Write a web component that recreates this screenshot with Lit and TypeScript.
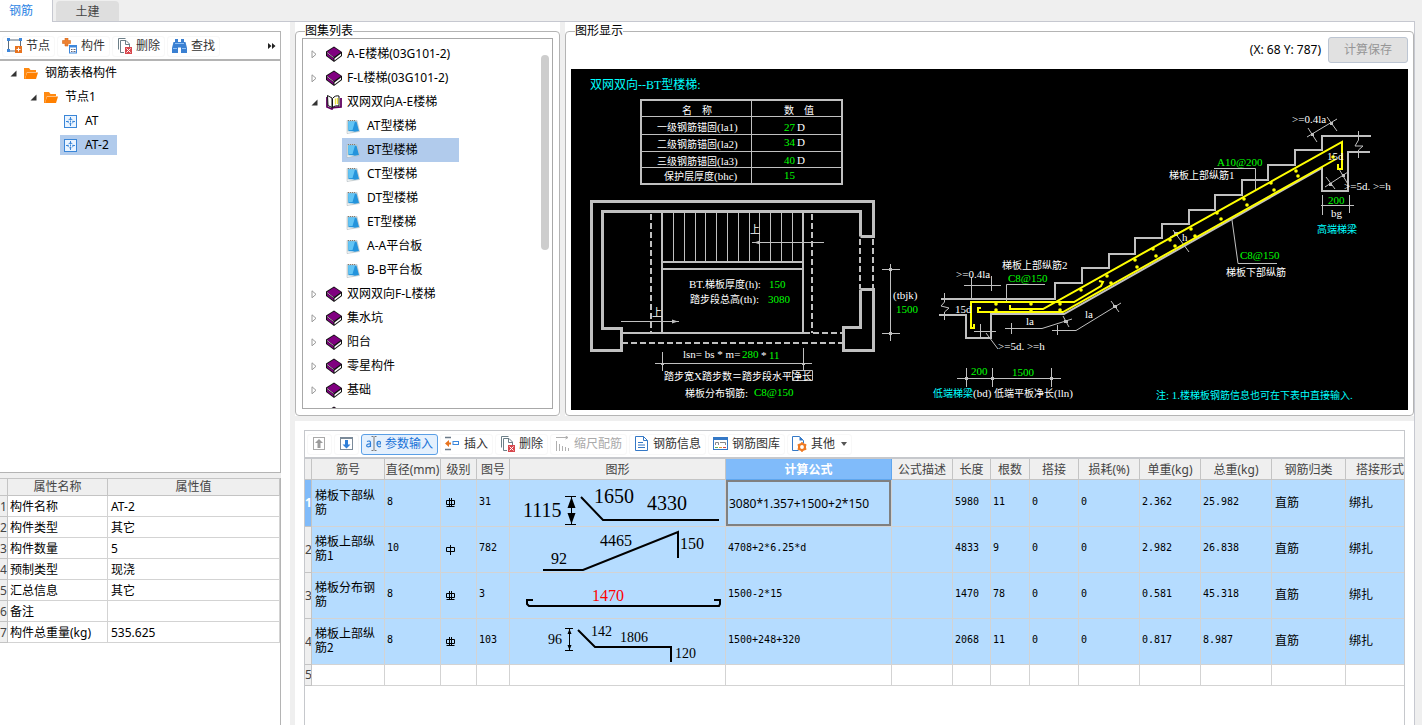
import { LitElement, html, svg, css, nothing } from "lit";
import { customElement, property, state } from "lit/decorators.js";
import { classMap } from "lit/directives/class-map.js";

/* ---------- icons ---------- */

const icons: Record<string, unknown> = {
  node: svg`<rect x="1.5" y="2" width="12" height="11" fill="#fff" stroke="#5b6b7b" />
    <path d="M0 0h3v3H0zM12 0h3v3h-3zM0 11h3v3H0z" fill="#3d87dc" />
    <rect x="8" y="8" width="7" height="7" fill="#e8731e" /><path d="M11.500 9.500v4M9.500 11.500h4" stroke="#fff" />`,
  part: svg`<path d="M3 0h3v2.500h2.500v3H6V8H3V5.500H.5v-3H3z" fill="#ee8232" stroke="#d56a1c" stroke-width=".6" />
    <rect x="7.500" y="7.500" width="7" height="7.500" fill="#fff" stroke="#3d87dc" /><path d="M7 7h8v2.500H7z" fill="#3d87dc" /><path d="M9 11.500h1.500M11.500 11.500h2M9 13.500h1.500M11.500 13.500h2" stroke="#667" />`,
  del: svg`<path d="M1.500 11.500v-11h7" fill="none" stroke="#6d7f88" /><path d="M7 14.500H3.500v-12H9l3.500 3.500v3" fill="#fff" stroke="#6d7f88" /><path d="M8.500 2.500v4h4" fill="none" stroke="#6d7f88" />
    <rect x="8" y="9" width="7" height="7" fill="#d8474d" /><path d="M9.500 10.500l4 4M13.500 10.500l-4 4" stroke="#fff" />`,
  find: svg`<path d="M3 1h3v3h3V1h3v3h1.500l1.500 6v5H9V9.500H6V15H0v-5l1.500-6H3z" fill="#3a80d2" /><path d="M1 10.500h4M10 10.500h4M3 5.500h9" stroke="#8fc0f5" />`,
  up: svg`<rect x="1.500" y="1.500" width="11" height="12" fill="#fff" stroke="#a9a9a9" /><path d="M7 3l4 4H8.500v5h-3V7H3z" fill="#9c9c9c" />`,
  down: svg`<rect x="1.500" y="1.500" width="12" height="12" fill="#fff" stroke="#7b8a99" /><path d="M1 1h13v2H1z" fill="#7b8a99" /><path d="M7.500 12.500l-4-4H6V4h3v4.500h2.500z" fill="#2f7fd8" />`,
  ae: svg`<path d="M5.500.5h2m1 0h2M8 1v13M5.500 14.500h2m1 0h2" stroke="#777" fill="none" />
    <path d="M1 5.500c2-1 3.500-.3 3.500 1.200V11M4.500 8C2 7.500.7 8.500.7 9.500c0 2 3 1.800 3.800 0M11 8h4c0-3.500-4-3.300-4 0s3 3.200 4 2" stroke="#2f7fd8" fill="none" stroke-width="1.200" />`,
  insert: svg`<path d="M0 1.500h6M0 13.500h6" stroke="#6b7a88" stroke-width="1.500" /><path d="M6 6.500v2H4V11L0 7.500 4 4v2.500z" fill="#e8731e" /><rect x="8" y="5.500" width="5.500" height="3" fill="#fff" stroke="#3d87dc" />`,
  scale: svg`<path d="M1.500 15V5M1 1.500h12M10.500 0L13 1.500 10.500 3M4.500 15V8M7.500 15v-5M10.500 15v-4M13.500 15v-3" stroke="#b0b0b0" fill="none" />`,
  info: svg`<path d="M1.500.5h8l4 4v10h-12z" fill="#fff" stroke="#3478c6" /><path d="M9.500.5v4h4" fill="none" stroke="#3478c6" /><path d="M4 6.500h5M4 9h7M4 11.500h7" stroke="#3478c6" />`,
  lib: svg`<rect x=".5" y="1.500" width="14" height="12" fill="#fff" stroke="#3478c6" /><path d="M0 1h15v3H0z" fill="#3478c6" /><path d="M2.500 9V6.500h3V9M7 6.500h5.500V9" fill="none" stroke="#888" /><path d="M2 11.500h3" stroke="#5aaf5a" /><path d="M6 11.500h3" stroke="#e0a030" /><path d="M10 11.500h3" stroke="#d8474d" />`,
  other: svg`<path d="M6.500 14.500h-6V.5h7l4 4v3" fill="#fff" stroke="#3478c6" /><path d="M7.500.5v4h4z" fill="#3478c6" /><circle cx="10" cy="11" r="3" fill="#fff" stroke="#ee7a24" stroke-width="2.200" /><path d="M10 6v2M10 14v2M5.700 8.500l1.800 1M12.500 12.500l1.800 1M14.300 8.500l-1.800 1M7.500 12.500l-1.800 1" stroke="#ee7a24" stroke-width="1.500" />`,
  folder: svg`<path d="M0 13V2h5l1.500 2H12v2H3L1 13z" fill="#ff8a12" /><path d="M3 6.500H14L12 13H1z" fill="#ff8000" />`,
  cell: svg`<rect x=".5" y="1.500" width="12" height="12" fill="#eaf4ff" stroke="#3a86d8" /><path d="M6.500 3v3.500M6.500 8.500V12M2 7.500h2.500M8.500 7.500H11" stroke="#3a86d8" /><circle cx="6.500" cy="7.500" r="2.500" fill="none" stroke="#3a86d8" stroke-dasharray="2 1" /><path d="M6 7h1v1H6z" fill="#3a86d8" />`,
  book: svg`<path d="M0 5.500L8 .5l8 5.500v4L8 16 0 10z" fill="#111" /><path d="M1 6l7-4.500L15 6 8 11z" fill="#800080" /><path d="M1 7.500l6.500 5v2L1 9.800z" fill="#800080" /><path d="M8.500 12.500l6.500-5v2l-6.500 5z" fill="#fff" /><path d="M1 6.500l6.500 5" stroke="#e9c0e9" stroke-width=".8" />`,
  open: svg`<path d="M1 3v10l5 2 1-1.500 8-.5V4" fill="none" stroke="#600060" stroke-width="1.800" /><path d="M1.500 1.500L6 4v9.500l-4-2z" fill="#fff" stroke="#111" /><path d="M6.500 4.500c2-2.500 4-3 6.500-2.500v10c-2.500-.5-5 0-6.500 1.500z" fill="#fff" stroke="#111" /><path d="M9.500 4.500v6M11.500 4v6" stroke="#e8e040" stroke-width="1.300" />`,
  pad: svg`<path d="M1 1.500h10l2.500 11L1 14.500z" fill="#d8ddd8" stroke="#a9b5bd" stroke-width=".5" /><path d="M2 2.500h8.500l2.500 9.500-4 .8-6.500-.6z" fill="#2494dc" /><path d="M2 2.500h7L6.500 11l-4 .3z" fill="#62c4f4" /><path d="M1.500 12.500h7l-7 1.500z" fill="#f4f7fa" /><path d="M2 1.500h8" stroke="#8a7a68" stroke-dasharray="1 1" />`,
};

const icon = (name: string, w = 15, h = 15) =>
  html`<svg width=${w} height=${h} viewBox="0 0 ${w} ${h}" aria-hidden="true">${icons[name]}</svg>`;

const base = css`
  :host {
    font-family: "Noto Sans", "Noto Sans CJK SC", sans-serif;
    font-size: 12px;
    line-height: 16px;
    color: #000;
  }
  * {
    box-sizing: border-box;
  }
  svg {
    flex: none;
    display: block;
  }
  button {
    font: inherit;
    color: inherit;
    margin: 0;
  }
`;

/* ---------- toolbar ---------- */

interface Tool {
  icon: string;
  label?: string;
  name?: string;
  active?: boolean;
  disabled?: boolean;
  menu?: boolean;
}

@customElement("tool-bar")
export class ToolBar extends LitElement {
  static styles = [
    base,
    css`
      :host {
        display: flex;
        align-items: center;
        gap: 2px;
        color: #333;
      }
      .tool {
        display: flex;
        align-items: center;
        gap: 4px;
        height: 21px;
        padding: 0 4px;
        border: 1px solid #f8f8f8;
        border-radius: 3px;
        background: #fff;
        white-space: nowrap;
      }
      .active {
        border-color: #5a9fe6;
        background: #e4f0fd;
        color: #1a73d8;
      }
      .tool:disabled {
        color: #aaa;
      }
      .caret {
        border: 3px solid transparent;
        border-top: 4px solid #555;
        border-bottom: 0;
        margin-left: 2px;
      }
    `,
  ];
  @property({ attribute: false }) tools: Tool[] = [];
  render() {
    return this.tools.map(
      (t) => html`<button
        class=${classMap({ tool: true, active: !!t.active })}
        ?disabled=${t.disabled}
        aria-label=${t.label ?? t.name ?? ""}
      >
        ${icon(t.icon, 15, 16)}${t.label ? html`<span>${t.label}</span>` : nothing}${t.menu
          ? html`<span class="caret"></span>`
          : nothing}
      </button>`
    );
  }
}

/* ---------- tree ---------- */

interface TreeItem {
  label: string;
  icon: string;
  level: number;
  arrow?: "open" | "closed";
}

@customElement("item-tree")
export class ItemTree extends LitElement {
  static styles = [
    base,
    css`
      :host {
        display: block;
        overflow: hidden;
      }
      .list {
        margin: 0;
        padding: 0;
        list-style: none;
      }
      .row {
        display: flex;
        align-items: center;
        height: 24px;
      }
      .left .l1 {
        padding-left: 20px;
      }
      .left .l2 {
        padding-left: 40px;
      }
      .atlas .l1 {
        padding-left: 20px;
      }
      .arrow {
        width: 15px;
        display: flex;
      }
      .left .arrow {
        width: 14px;
      }
      .item {
        display: flex;
        align-items: center;
        gap: 4px;
        height: 24px;
        padding: 0 8px 0 4px;
        margin-left: -4px;
        border: 0;
        background: none;
        white-space: nowrap;
      }
      .left .item {
        height: 20px;
        gap: 7px;
      }
      .item.selected {
        background: #b1cbec;
      }
      .atlas .l1 .item {
        min-width: 117px;
        gap: 7px;
      }
    `,
  ];
  @property({ attribute: false }) items: TreeItem[] = [];
  @property() kind = "left";
  @state() private picked = "";
  @property() selected = "";

  render() {
    const current = this.picked || this.selected;
    return html`<ul class="list ${this.kind}" role="tree">
      ${this.items.map(
        (i) => html`<li class="row l${i.level}" role="treeitem">
          <span class="arrow">
            ${i.arrow === "open"
              ? html`<svg width="7" height="7"><path d="M6.500 .5v6h-6z" fill="#333" /></svg>`
              : i.arrow === "closed"
                ? html`<svg width="7" height="9"><path d="M1 .8v7l4-3.500z" fill="#fff" stroke="#999" /></svg>`
                : nothing}
          </span>
          <button
            class=${classMap({ item: true, selected: !!i.label && i.label === current })}
            @click=${() => (this.picked = i.label)}
          >
            ${i.icon === "book" || i.icon === "open" ? icon(i.icon, 17, 16) : icon(i.icon, 14, 15)}<span>${i.label}</span>
          </button>
        </li>`
      )}
    </ul>`;
  }
}

/* ---------- property grid ---------- */

@customElement("property-grid")
export class PropertyGrid extends LitElement {
  static styles = [
    base,
    css`
      :host {
        display: block;
      }
      .grid {
        width: 100%;
        table-layout: fixed;
        border-collapse: separate;
        border-spacing: 0;
        border-top: 1px solid #c4c4c4;
      }
      .num {
        width: 8px;
      }
      .key {
        width: 100px;
      }
      th,
      td {
        height: 21px;
        padding: 2px 0 0 2px;
        border-right: 1px solid #d3d3d3;
        border-bottom: 1px solid #d3d3d3;
        text-align: left;
        font-weight: 400;
        white-space: nowrap;
        overflow: hidden;
      }
      thead th {
        height: 17px;
        padding: 0;
        text-align: center;
        background: #efefef;
        border-color: #c4c4c4;
        color: #444;
      }
      tbody th {
        padding: 2px 0 0;
        background: #efefef;
        border-color: #c4c4c4;
        color: #444;
      }
      td + td {
        padding-left: 3px;
      }
    `,
  ];
  @property({ attribute: false }) rows: [string, string][] = [];
  render() {
    return html`<table class="grid">
      <colgroup><col class="num" /><col class="key" /><col /></colgroup>
      <thead>
        <tr><th></th><th>属性名称</th><th>属性值</th></tr>
      </thead>
      <tbody>
        ${this.rows.map(([k, v], n) => html`<tr><th>${n + 1}</th><td>${k}</td><td>${v}</td></tr>`)}
      </tbody>
    </table>`;
  }
}

/* ---------- stair drawing ---------- */

type Label = [x: number, y: number, text: string, tone?: string];

@customElement("stair-drawing")
export class StairDrawing extends LitElement {
  static styles = css`
    :host {
      display: block;
      background: #000;
      overflow: hidden;
    }
    .sheet {
      display: block;
      width: 100%;
      height: 100%;
    }
    .thick {
      fill: none;
      stroke: #c0c0c0;
      stroke-width: 3;
    }
    .mid {
      fill: none;
      stroke: #c0c0c0;
      stroke-width: 2;
    }
    .thin {
      fill: none;
      stroke: #c0c0c0;
    }
    .dash {
      fill: none;
      stroke: #c0c0c0;
      stroke-width: 2;
      stroke-dasharray: 6 3;
    }
    .bar {
      fill: none;
      stroke: #ff0;
      stroke-width: 2;
    }
    .dot {
      fill: #ff0;
    }
    .head {
      fill: #c0c0c0;
    }
    text {
      font-family: "Noto Sans CJK SC", sans-serif;
      font-size: 10px;
      fill: #fff;
      white-space: pre;
    }
    .latin {
      font-family: "Liberation Serif", serif;
      font-size: 11px;
    }
    .title {
      font-size: 12px;
    }
    .title .latin {
      font-size: 12px;
    }
    .cyan {
      fill: #0ff;
    }
    .green {
      fill: #0f0;
    }
  `;

  private readonly labels: Label[] = [
    [590, 89, "双网双向--BT型楼梯:", "cyan title"],
    [682, 114, "名　称"],
    [784, 114, "数　值"],
    [657, 131, "一级钢筋锚固(la1)"],
    [657, 148, "二级钢筋锚固(la2)"],
    [657, 165, "三级钢筋锚固(la3)"],
    [664, 180, "保护层厚度(bhc)"],
    [784, 131, "27", "green"],
    [784, 146, "34", "green"],
    [784, 164, "40", "green"],
    [784, 179, "15", "green"],
    [797, 131, "D"],
    [797, 146, "D"],
    [797, 164, "D"],
    [750, 233, "上"],
    [652, 316, "上"],
    [689, 288, "BT.梯板厚度(h):"],
    [769, 288, "150", "green"],
    [690, 303, "踏步段总高(th):"],
    [768, 303, "3080", "green"],
    [893, 299, "(tbjk)"],
    [896, 313, "1500", "green"],
    [683, 358, "lsn= bs * m="],
    [742, 358, "280", "green"],
    [761, 359, "*"],
    [769, 359, "11", "green"],
    [664, 380, "踏步宽X踏步数＝踏步段水平净长"],
    [685, 397, "梯板分布钢筋:"],
    [754, 396, "C8@150", "green"],
    [956, 278, ">=0.4la"],
    [1002, 269, "梯板上部纵筋2"],
    [1008, 282, "C8@150", "green"],
    [955, 313, "15d"],
    [998, 350, ">=5d. >=h"],
    [1026, 325, "la"],
    [1085, 318, "la"],
    [971, 375, "200", "green"],
    [1012, 376, "1500", "green"],
    [933, 397, "低端梯梁", "cyan"],
    [973, 397, "(bd)"],
    [994, 397, "低端平板净长(lln)"],
    [1217, 166, "A10@200", "green"],
    [1169, 179, "梯板上部纵筋1"],
    [1182, 241, "h"],
    [1292, 123, ">=0.4la"],
    [1327, 160, "15d"],
    [1344, 190, ">=5d. >=h"],
    [1328, 204, "200", "green"],
    [1331, 217, "bg"],
    [1317, 233, "高端梯梁", "cyan"],
    [1240, 259, "C8@150", "green"],
    [1226, 276, "梯板下部纵筋"],
    [1156, 399, "注: 1.楼梯板钢筋信息也可在下表中直接输入.", "cyan"],
  ];

  private readonly dots = [
    [996, 304], [1031, 304], [996, 310], [1031, 310], [1060, 304], [1060, 310], [1081, 290], [1107, 276], [1111, 283],
    [1135, 260], [1137, 267], [1153, 249], [1156, 256], [1170, 240], [1175, 246], [1191, 229], [1195, 236],
    [1217, 213], [1221, 219], [1244, 199], [1247, 205], [1271, 183], [1274, 190], [1296, 171], [1298, 176], [1333, 157],
  ];

  private label([x, y, text, tone = ""]: Label) {
    const runs = text.match(/[\x20-\x7e]+|[^\x20-\x7e]+/g) ?? [];
    return svg`<text x=${x} y=${y} class=${tone}>${runs.map((r) =>
      /^[\x20-\x7e]/.test(r) ? svg`<tspan class="latin">${r}</tspan>` : svg`<tspan>${r}</tspan>`
    )}</text>`;
  }

  render() {
    const treads = [673, 684, 695, 705, 716, 727, 738, 749, 759, 770, 781, 792];
    return html`<svg class="sheet" viewBox="571 69 837 341" role="img" aria-label="BT型楼梯">
      <path class="mid" d="M641 100H842V184H641z" />
      <path class="thin" d="M641 116.500H842M641 134.500H842M641 151.500H842M641 167.500H842M751.500 100V184" />

      <path class="thick" d="M860.500 236.500H873.500V201.500H591.500V350.500H621.500V328.500H602.500V211.500H860.500V236.500" />
      <path class="thick" d="M860.500 289.500H873.500V350.500H843.500V327.500H860.500V289.500" />
      <path class="mid" d="M622 333H804M662 212V333M803 212V333M662 262H803M662 269H803" />
      <path class="dash" d="M860 239V289M873 239V289M804 333H843M622 343H843M651 214V333M812 214V333" />
      <path class="thin" d=${treads.map((x) => `M${x + 0.5} 212V262`).join("")} />
      <path
        class="thin"
        d="M752 242.500H824M621 321.500H679M890.500 264V341M882 269.500H900M882 333.500H900M655 363.500H812M662.500 352V371M803.500 348V370M792.500 370.500H812.500V380.500H792.500z"
      />
      <path class="head" d="M754 242.500l6-2v4zM678 321.500l-6-2v4zM661 363h3v2h-3zM802 363h3v2h-3zM889 268h3v3h-3zM889 332h3v3h-3z" />

      <path
        class="mid"
        d="M941 299H1055V283H1082V268H1109V254H1135V238H1162V224H1189V210H1215V195H1242V180H1268V165H1295V150H1322V136H1371M1370 152H1348V191H1322V168L1064 314H991V338H966V315H939"
      />
      <path
        class="thin"
        d="M944.500 293V302L941 306L949 308L944.500 312V320M1358.500 131V140L1355 146H1363L1358.500 150V158
        M964 285.500H1001M971.500 277V299M991.500 276V291M1045 284.500H1006.500V301
        M974 331.500H996M980.500 324V338M986 333L998 349
        M1005 328.500H1042L1072 319M1011.500 323V334M1063 316L1069 327
        M1052 330.500H1076L1121 303M1057.500 325V335M1111 301L1119 312
        M957 378.500H1061M966.500 368V387M992.500 368V387M1051.500 368V387
        M1214 168.500H1255.500V190M1173 230L1189 252M1170 237L1184 230
        M1307 137L1337 119M1308 128L1317 142M1327 117L1337 131
        M1325 187L1348 172M1326 177L1335 189M1339 169L1349 186
        M1321 205.500H1354M1322.500 195V215M1349.500 195V213M1232 220L1238 263.500H1277"
      />
      <path class="head" d="M1311 133h3v3h-3zM1330 122h3v3h-3zM1329 183h3v3h-3zM1342 174h3v3h-3zM1174 232h4v4h-4zM965 377h3v3h-3zM991 377h3v3h-3zM1050 377h3v3h-3zM1064 320h4v3h-4zM1113 305h4v3h-4z" />
      <path
        class="bar"
        d="M974 324V328H971V302H1074L1101 286L1103 282L1099 281M1010 305V309H1043L1342 142V169H1338V164M981 308H978V312H1063L1336 159"
      />
      ${this.dots.map(([x, y]) => svg`<circle class="dot" cx=${x} cy=${y} r="1.800" />`)}
      ${this.labels.map((l) => this.label(l))}
    </svg>`;
  }
}

/* ---------- rebar table ---------- */

interface Rebar {
  name: string;
  dia: string;
  grade: string;
  shape: string;
  formula: string;
  len: string;
  count: string;
  unit: string;
  total: string;
}

const figures: Record<string, unknown> = {
  "31": svg`<path class="line" d="M71 16L93 39H209" /><path class="fine" d="M55 15.500H66M61.500 15V44M55 43.500H66" /><path d="M61.500 16l4 11h-8zM61.500 43l4-11h-8z" />
    <text class="big" x="13" y="36">1115</text><text class="big" x="84" y="22">1650</text><text class="big" x="137" y="29">4330</text>`,
  "782": svg`<path class="line" d="M33 43H73L168 5V31" /><text x="90" y="19">4465</text><text x="41" y="37">92</text><text x="170" y="22">150</text>`,
  "3": svg`<path class="line" d="M23 27H17V31L19 33H209L210 31V27H204" /><text class="red" x="82" y="28">1470</text>`,
  "103": svg`<path class="line" d="M68 11L85 28H161V43" /><path class="fine" d="M55 9.500H63M59.500 9V31M55 31.500H63" /><path d="M59.500 10l2 5h-4zM59.500 31l2-5h-4z" />
    <text class="small" x="38" y="25">96</text><text class="small" x="81" y="17">142</text><text class="small" x="110" y="23">1806</text><text class="small" x="165" y="39">120</text>`,
};

@customElement("rebar-table")
export class RebarTable extends LitElement {
  static styles = [
    base,
    css`
      :host {
        display: block;
        overflow: hidden;
      }
      .grid {
        width: max(1110px, 100%);
        table-layout: fixed;
        border-collapse: separate;
        border-spacing: 0;
      }
      th,
      td {
        padding: 0 0 0 3px;
        border-right: 1px solid #d3d3d3;
        border-bottom: 1px solid #d3d3d3;
        font-weight: 400;
        text-align: left;
        overflow: hidden;
      }
      thead th {
        height: 21px;
        padding: 2px 0 0;
        text-align: center;
        white-space: nowrap;
        background: #efefef;
        border-color: #c4c4c4;
        color: #444;
      }
      thead .current {
        background: #80bbfa;
        border-color: #5fa6ee;
        color: #fff;
        font-weight: 700;
      }
      tbody th {
        padding: 0;
        background: #efefef;
        border-color: #c4c4c4;
        color: #444;
      }
      tbody .current {
        background: #80bbfa;
        color: #fff;
        font-weight: 700;
      }
      .data td {
        height: 46px;
        background: #b5dcff;
      }
      .blank td {
        height: 21px;
      }
      .value {
        padding: 0 0 3px 2px;
        font-family: "DejaVu Sans Mono", "Noto Sans CJK SC", monospace;
        font-size: 10px;
      }
      .word,
      .name {
        padding-bottom: 3px;
        font-family: "Noto Sans CJK SC", sans-serif;
        line-height: 14px;
      }
      .figure {
        padding: 0;
      }
      .figure svg {
        margin: 0 auto;
      }
      .grade {
        padding-left: 5px;
      }
      .edit {
        padding: 0;
      }
      .input {
        display: block;
        width: 100%;
        height: 46px;
        padding: 0 1px;
        border: 2px solid #808080;
        border-radius: 0;
        background: #b5dcff;
        font: inherit;
        outline: 0;
      }
      .line {
        fill: none;
        stroke: #000;
        stroke-width: 2;
      }
      .fine {
        fill: none;
        stroke: #000;
      }
      text {
        font-family: "Liberation Serif", serif;
        font-size: 16px;
      }
      .big {
        font-size: 20px;
      }
      .small {
        font-size: 14px;
      }
      .red {
        fill: #f00;
      }
    `,
  ];
  @property({ attribute: false }) rows: Rebar[] = [];

  private readonly columns: [string, number][] = [
    ["", 7], ["筋号", 73], ["直径(mm)", 56], ["级别", 36], ["图号", 33], ["图形", 216], ["计算公式", 166], ["公式描述", 61],
    ["长度", 38], ["根数", 39], ["搭接", 49], ["损耗(%)", 61], ["单重(kg)", 61], ["总重(kg)", 71], ["钢筋归类", 74], ["搭接形式", 69],
  ];

  render() {
    return html`<table class="grid">
      <colgroup>${this.columns.map(([, w]) => html`<col style="width:${w}px" />`)}</colgroup>
      <thead>
        <tr>${this.columns.map(([c]) => html`<th class=${c === "计算公式" ? "current" : ""}>${c}</th>`)}</tr>
      </thead>
      <tbody>
        ${this.rows.map(
          (r, n) => html`<tr class="data">
            <th class=${n === 0 ? "current" : ""}>${n + 1}</th>
            <td class="name">${r.name}</td>
            <td class="value">${r.dia}</td>
            <td class="grade">
              <svg width="9" height="10" role="img" aria-label=${r.grade}>
                <path
                  d=${r.grade === "A" ? "M.5 2.500h8v4h-8zM4.500 0v10" : "M.5 2.500h8v4h-8zM3.500 0v8.500M5.500 0v8.500M.5 8.500h8"}
                  fill="none"
                  stroke="#000"
                />
              </svg>
            </td>
            <td class="value">${r.shape}</td>
            <td class="figure"><svg width="215" height="45" viewBox="0 0 215 45">${figures[r.shape]}</svg></td>
            ${n === 0
              ? html`<td class="edit"><input class="input" aria-label="计算公式" .value=${r.formula} /></td>`
              : html`<td class="value">${r.formula}</td>`}
            <td></td>
            <td class="value">${r.len}</td>
            <td class="value">${r.count}</td>
            <td class="value">0</td>
            <td class="value">0</td>
            <td class="value">${r.unit}</td>
            <td class="value">${r.total}</td>
            <td class="word">直筋</td>
            <td class="word">绑扎</td>
          </tr>`
        )}
        <tr class="blank"><th>5</th>${this.columns.slice(1).map(() => html`<td></td>`)}</tr>
      </tbody>
    </table>`;
  }
}

/* ---------- application ---------- */

@customElement("app-root")
export class AppRoot extends LitElement {
  static styles = [
    base,
    css`
      :host {
        display: flex;
        flex-direction: column;
        height: 100vh;
        background: #efefef;
        overflow: hidden;
      }
      .tabs {
        display: flex;
        flex: none;
        height: 22px;
        margin-right: 7px;
        border-bottom: 1px solid #c6c8d0;
      }
      .tab {
        border: 0;
        width: 63px;
        margin: 1px 0 0 3px;
        padding: 2px 0 0;
        border-radius: 4px 4px 0 0;
        background: #dedede;
        color: #444;
      }
      .tab.on {
        width: 53px;
        height: 22px;
        margin: 0;
        padding: 0 10px 0 0;
        border-radius: 0;
        border-right: 1px solid #c6c8d0;
        background: #fff;
        color: #2b84e4;
      }
      .body {
        flex: 1;
        min-height: 0;
        display: grid;
        grid-template-columns: 290px minmax(0, 1fr);
        grid-template-rows: minmax(0, 1fr);
        column-gap: 5px;
        margin-right: 7px;
        border-right: 1px solid #c6c8d0;
      }
      .side {
        display: grid;
        grid-template-rows: minmax(0, 1fr) 247px;
        padding: 9px 9px 0 0;
        background: #fff;
      }
      .panel {
        display: flex;
        flex-direction: column;
        min-height: 0;
        margin-bottom: 5px;
        border: 1px solid #b4b4b4;
        border-left: 0;
        box-shadow: 0 5px #efefef;
      }
      .bar {
        display: flex;
        align-items: center;
        justify-content: space-between;
        flex: none;
        height: 29px;
        padding: 1px 3px 0 2px;
        border-bottom: 2px solid #b4b4b4;
      }
      .more {
        width: 9px;
        height: 20px;
        padding: 0;
        border: 0;
        background: none;
      }
      .panel item-tree {
        padding-left: 10px;
      }
      .props {
        border-right: 1px solid #b4b4b4;
      }
      .main {
        display: grid;
        grid-template-rows: minmax(0, 1fr) 304px;
        row-gap: 5px;
        min-width: 0;
      }
      .top {
        display: grid;
        grid-template-columns: 265px minmax(0, 1fr);
        grid-template-rows: minmax(0, 1fr);
        column-gap: 5px;
        min-height: 0;
      }
      .wrap {
        display: flex;
        min-width: 0;
        min-height: 0;
        padding-top: 2px;
        background: #fff;
      }
      .group {
        flex: 1;
        display: flex;
        flex-direction: column;
        min-width: 0;
        margin: 0;
        padding: 0 6px 6px;
        border: 1px solid #b4b4b4;
        border-radius: 4px;
      }
      .group legend {
        height: 14px;
        margin-left: 3px;
        padding: 0;
        line-height: 14px;
      }
      .wide {
        padding: 0 5px 5px;
      }
      .wide legend {
        margin-left: 4px;
      }
      .atlas {
        flex: 1;
        min-height: 0;
        display: flex;
        justify-content: space-between;
        border: 1px solid #a8a8a8;
        padding: 3px 3px 0 8px;
      }
      .thumb {
        width: 8px;
        height: 195px;
        margin-top: 13px;
        border-radius: 4px;
        background: #cdcdcd;
      }
      .head {
        display: flex;
        align-items: center;
        justify-content: flex-end;
        gap: 7px;
        height: 31px;
        padding-bottom: 7px;
      }
      .save {
        width: 80px;
        height: 26px;
        border: 1px solid #bcc5d2;
        border-radius: 3px;
        background: #e1e1e1;
        color: #969696;
      }
      stair-drawing {
        flex: 1;
        min-height: 0;
      }
      .bottom {
        padding: 9px 9px 0;
        background: #fff;
        min-width: 0;
      }
      .detail {
        border: 1px solid #c6c8cc;
        border-bottom: 0;
        height: 100%;
      }
      .detail tool-bar {
        height: 28px;
        padding-left: 2px;
        border-bottom: 2px solid #c6c8cc;
      }
    `,
  ];

  private readonly leftTools: Tool[] = [
    { icon: "node", label: "节点" },
    { icon: "part", label: "构件" },
    { icon: "del", label: "删除" },
    { icon: "find", label: "查找" },
  ];
  private readonly detailTools: Tool[] = [
    { icon: "up", name: "上移" },
    { icon: "down", name: "下移" },
    { icon: "ae", label: "参数输入", active: true },
    { icon: "insert", label: "插入" },
    { icon: "del", label: "删除" },
    { icon: "scale", label: "缩尺配筋", disabled: true },
    { icon: "info", label: "钢筋信息" },
    { icon: "lib", label: "钢筋图库" },
    { icon: "other", label: "其他", menu: true },
  ];
  private readonly parts: TreeItem[] = [
    { label: "钢筋表格构件", icon: "folder", level: 0, arrow: "open" },
    { label: "节点1", icon: "folder", level: 1, arrow: "open" },
    { label: "AT", icon: "cell", level: 2 },
    { label: "AT-2", icon: "cell", level: 2 },
  ];
  private readonly atlas: TreeItem[] = [
    { label: "A-E楼梯(03G101-2)", icon: "book", level: 0, arrow: "closed" },
    { label: "F-L楼梯(03G101-2)", icon: "book", level: 0, arrow: "closed" },
    { label: "双网双向A-E楼梯", icon: "open", level: 0, arrow: "open" },
    ...["AT型楼梯", "BT型楼梯", "CT型楼梯", "DT型楼梯", "ET型楼梯", "A-A平台板", "B-B平台板"].map((label) => ({
      label,
      icon: "pad",
      level: 1,
    })),
    ...["双网双向F-L楼梯", "集水坑", "阳台", "零星构件", "基础", ""].map((label) => ({
      label,
      icon: "book",
      level: 0,
      arrow: "closed" as const,
    })),
  ];
  private readonly props: [string, string][] = [
    ["构件名称", "AT-2"],
    ["构件类型", "其它"],
    ["构件数量", "5"],
    ["预制类型", "现浇"],
    ["汇总信息", "其它"],
    ["备注", ""],
    ["构件总重量(kg)", "535.625"],
  ];
  private readonly rebars: Rebar[] = [
    { name: "梯板下部纵筋", dia: "8", grade: "C", shape: "31", formula: "3080*1.357+1500+2*150", len: "5980", count: "11", unit: "2.362", total: "25.982" },
    { name: "梯板上部纵筋1", dia: "10", grade: "A", shape: "782", formula: "4708+2*6.25*d", len: "4833", count: "9", unit: "2.982", total: "26.838" },
    { name: "梯板分布钢筋", dia: "8", grade: "C", shape: "3", formula: "1500-2*15", len: "1470", count: "78", unit: "0.581", total: "45.318" },
    { name: "梯板上部纵筋2", dia: "8", grade: "C", shape: "103", formula: "1500+248+320", len: "2068", count: "11", unit: "0.817", total: "8.987" },
  ];

  render() {
    return html`
      <nav class="tabs">
        <button class="tab on">钢筋</button>
        <button class="tab">土建</button>
      </nav>
      <div class="body">
        <aside class="side">
          <section class="panel">
            <div class="bar">
              <tool-bar .tools=${this.leftTools}></tool-bar>
              <button class="more" aria-label="更多">
                <svg width="8" height="6"><path d="M0 0l3.500 3L0 6zM4 0l3.500 3L4 6z" fill="#222" /></svg>
              </button>
            </div>
            <item-tree kind="left" selected="AT-2" .items=${this.parts}></item-tree>
          </section>
          <section class="props"><property-grid .rows=${this.props}></property-grid></section>
        </aside>
        <main class="main">
          <div class="top">
            <div class="wrap">
              <fieldset class="group">
                <legend>图集列表</legend>
                <div class="atlas">
                  <item-tree kind="atlas" selected="BT型楼梯" .items=${this.atlas}></item-tree>
                  <span class="thumb"></span>
                </div>
              </fieldset>
            </div>
            <div class="wrap">
              <fieldset class="group wide">
                <legend>图形显示</legend>
                <div class="head">
                  <span>(X: 68 Y: 787)</span>
                  <button class="save" disabled>计算保存</button>
                </div>
                <stair-drawing></stair-drawing>
              </fieldset>
            </div>
          </div>
          <section class="bottom">
            <div class="detail">
              <tool-bar .tools=${this.detailTools}></tool-bar>
              <rebar-table .rows=${this.rebars}></rebar-table>
            </div>
          </section>
        </main>
      </div>
    `;
  }
}
